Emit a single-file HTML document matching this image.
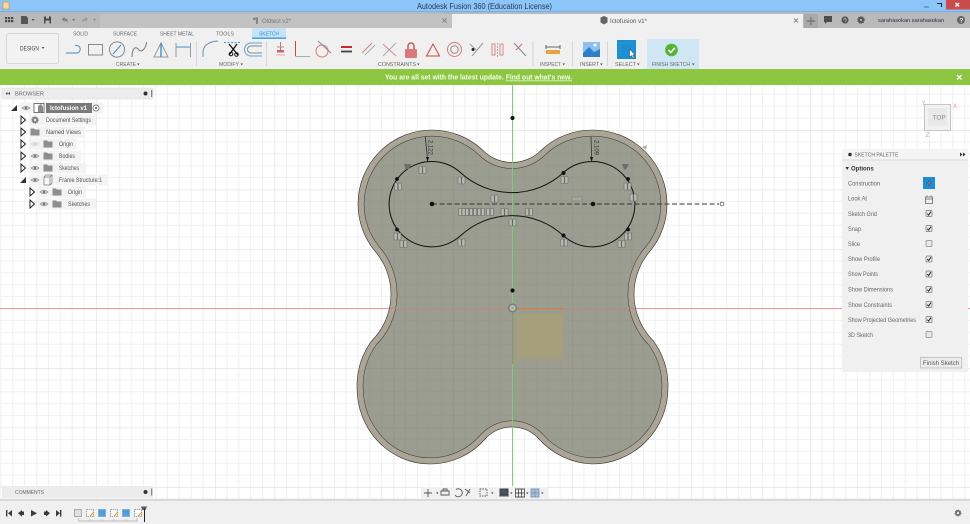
<!DOCTYPE html>
<html><head><meta charset="utf-8"><title>Autodesk Fusion 360</title>
<style>
html,body{margin:0;padding:0;background:#fff;width:970px;height:524px;overflow:hidden}
svg{display:block;filter:blur(.35px)}
text{font-family:"Liberation Sans",sans-serif;font-size:6px;fill:#555}
.l{font-size:5.6px;fill:#666}
.t{font-size:6px;fill:#555}
.p{font-size:6px;fill:#666}
</style></head><body>
<svg width="970" height="524" viewBox="0 0 970 524" xmlns="http://www.w3.org/2000/svg">
<defs>
<pattern id="g" patternUnits="userSpaceOnUse" x="512.5" y="308.5" width="59.5" height="59.5">
<path d="M11.9 0V59.5M23.8 0V59.5M35.7 0V59.5M47.6 0V59.5M0 11.9H59.5M0 23.8H59.5M0 35.7H59.5M0 47.6H59.5" stroke="#f0f0f0" stroke-width="1" fill="none"/>
<path d="M0 0V59.5M0 0H59.5" stroke="#e4e4e4" stroke-width="1.4" fill="none"/>
</pattern>
<pattern id="gi" patternUnits="userSpaceOnUse" x="512.5" y="308.5" width="59.5" height="59.5">
<path d="M11.9 0V59.5M23.8 0V59.5M35.7 0V59.5M47.6 0V59.5M0 11.9H59.5M0 23.8H59.5M0 35.7H59.5M0 47.6H59.5" stroke="#000" stroke-opacity=".02" stroke-width="1" fill="none"/>
<path d="M0 0V59.5M0 0H59.5" stroke="#000" stroke-opacity=".05" stroke-width="1.4" fill="none"/>
</pattern>
<path id="o" d="M483,150.4 A41 41 0 0 0 541,150.4 A74 74 0 0 1 593,130 A74 74 0 0 1 667,204 A74 74 0 0 1 650.4,250.7 A66 66 0 0 0 653.3,340.8 A75 76 0 0 1 668,388 A76 76 0 0 1 592,464 A76 76 0 0 1 538,438 A36 36 0 0 0 486,438 A74 76 0 0 1 430,464 A73 76 0 0 1 357,388 A74 76 0 0 1 371.7,340.8 A66 66 0 0 0 374.6,250.7 A74 74 0 0 1 358,204 A74 74 0 0 1 432,130 A74 74 0 0 1 483,150.4 Z"/>
<clipPath id="oc"><use href="#o"/></clipPath>
<g id="c"><rect x="-3.5" y="-3.5" width="3.2" height="7" rx=".8" fill="#b9bab0" stroke="#666" stroke-width=".6"/><rect x=".3" y="-3.5" width="3.2" height="7" rx=".8" fill="#b9bab0" stroke="#666" stroke-width=".6"/></g>
<g id="eye"><path d="M-4 0Q0 -3.5 4 0Q0 3.5 -4 0Z" fill="#ddd" stroke="#8a8a8a" stroke-width=".7"/><circle r="1.3" fill="#777"/></g>
<g id="fo"><path d="M-4.5 -3.5H-1L0 -2.5H4.5V3.5H-4.5Z" fill="#8e8e8e"/></g>
<path id="tr" d="M-2 -4L2.5 0L-2 4Z" fill="#fff" stroke="#222" stroke-width="1"/>
<path id="td" d="M-3 3H3V-3Z" fill="#333"/>
<g id="ck"><rect x="-3" y="-3" width="6" height="6" rx="1" fill="#e8e8e8" stroke="#777" stroke-width=".7"/><path d="M-1.7 .2L-.4 1.6L1.9 -1.8" fill="none" stroke="#222" stroke-width="1"/></g>
<g id="un"><rect x="-3" y="-3" width="6" height="6" rx="1" fill="#e8e8e8" stroke="#888" stroke-width=".7"/></g>
</defs>

<!-- canvas -->
<rect x="0" y="85" width="970" height="415" fill="#fff"/>
<rect x="0" y="85" width="970" height="415" fill="url(#g)"/>
<path d="M0 308.5H970" stroke="#ec9a9a" stroke-width="1"/>

<!-- body -->
<use href="#o" fill="#9b9d91"/>
<g clip-path="url(#oc)">
<rect x="350" y="125" width="325" height="345" fill="url(#gi)"/>
<use href="#o" fill="none" stroke="#333" stroke-width="12.7"/>
<use href="#o" fill="none" stroke="#aaa595" stroke-width="11.7"/>
</g>
<use href="#o" fill="none" stroke="#333" stroke-width=".6"/>
<path d="M391 308.5H634" stroke="#c08a80" stroke-width="1"/>
<rect x="518" y="314" width="45" height="45" fill="#a69f7c"/>
<path d="M512.5 85V486" stroke="#74d474" stroke-width="1"/>
<path d="M512.5 312V364" stroke="#8f9a3a" stroke-width="1"/>
<path d="M518 308.5H563" stroke="#de7a2c" stroke-width="1"/>
<circle cx="512.5" cy="308" r="3.8" fill="#bbb" stroke="#777" stroke-width="1.4"/>
<circle cx="512.5" cy="308" r="1.2" fill="#6ac06a"/>

<!-- sketch -->
<path d="M461,173 A76 76 0 0 0 563,173 A42.7 42.7 0 1 1 563,235.3 A76 76 0 0 0 461,235.3 A42.7 42.7 0 1 1 461,173 Z" fill="none" stroke="#111" stroke-width="1"/>
<path d="M432 204H719" stroke="#333" stroke-width=".9" stroke-dasharray="5 2.5"/>
<circle cx="722" cy="204" r="1.9" fill="#fff" stroke="#444" stroke-width=".7"/>
<g fill="#111"><circle cx="432" cy="204" r="2.3"/><circle cx="593" cy="204" r="2.3"/><circle cx="512.5" cy="118" r="2.1"/><circle cx="512.5" cy="290.5" r="2.1"/><circle cx="397" cy="179" r="1.9"/><circle cx="397" cy="229.5" r="1.9"/><circle cx="563.5" cy="173" r="2"/><circle cx="563.5" cy="235.5" r="2"/><circle cx="628" cy="179" r="1.9"/><circle cx="628" cy="229.5" r="1.9"/></g>
<path d="M425.3 136.7L427.4 158M591 136.7L591.6 158" stroke="#222" stroke-width=".7"/>
<path d="M426 157L429 157L427.6 162ZM590 157L593 157L591.7 162Z" fill="#111"/>
<text transform="translate(428.5,140) rotate(90)" style="font-size:6px;fill:#333">2.122</text>
<text transform="translate(594.5,140) rotate(90)" style="font-size:6px;fill:#333">2.109</text>
<path d="M404 164H411L409.5 169H405.5ZM622 164H629L626 169.5H624Z" fill="#6d6d6d"/>
<path d="M642 147L647 145L646 150Z" fill="#b0b0a8"/>
<use href="#c" x="422.5" y="170"/><use href="#c" x="461.5" y="180.5"/><use href="#c" x="494.5" y="198.5"/><use href="#c" x="398" y="186.5"/><use href="#c" x="564.5" y="180"/><use href="#c" x="627.5" y="186.5"/><use href="#c" x="633.5" y="197.5"/>
<use href="#c" x="462" y="212"/><use href="#c" x="465.5" y="212"/><use href="#c" x="469" y="212"/><use href="#c" x="473" y="212"/><use href="#c" x="477" y="212"/><use href="#c" x="481" y="212"/><use href="#c" x="490" y="212"/><use href="#c" x="504.5" y="212"/><use href="#c" x="529" y="212"/>
<use href="#c" x="512.5" y="222.5"/><use href="#c" x="397.5" y="236.5"/><use href="#c" x="403.5" y="244"/><use href="#c" x="461.5" y="242.5"/><use href="#c" x="564" y="242.5"/><use href="#c" x="628" y="236.5"/><use href="#c" x="621.5" y="244"/>
<rect x="572" y="197" width="10" height="4" fill="#a9a99e" stroke="#777" stroke-width=".5"/>

<!-- viewcube -->
<rect x="924.5" y="104.5" width="26" height="26" fill="#f2f2f2" stroke="#c4c4c4" stroke-width="1"/>
<rect x="928" y="108" width="19" height="18" fill="#e9e9e9"/>
<text x="932.5" y="119.5" style="font-size:6.5px;fill:#888">TOP</text>
<text x="921.5" y="105" style="font-size:6px;fill:#8fd68f">Y</text>
<text x="953" y="108" style="font-size:6px;fill:#e89090">X</text>
<text x="925.5" y="137" style="font-size:6.5px;fill:#8fb8ea">Z</text>

<!-- browser -->
<rect x="2" y="88" width="151" height="11" fill="#ececec" stroke="#ddd" stroke-width=".5"/>
<path d="M5.5 93.5l2 -1.5v3zM8 93.5l2 -1.5v3z" fill="#444"/>
<text x="15" y="95.3" class="l" style="font-size:5.6px">BROWSER</text>
<circle cx="145.5" cy="93.5" r="2" fill="#333"/><rect x="151" y="90" width="1.3" height="7" fill="#888"/>

<g fill="#f3f3f3">
<rect x="20" y="102.5" width="83" height="11"/><rect x="29" y="114.5" width="67" height="11"/><rect x="29" y="126.5" width="56" height="11"/><rect x="29" y="138.5" width="48" height="11"/><rect x="29" y="150.5" width="52" height="11"/><rect x="29" y="162.5" width="57" height="11"/><rect x="29" y="174.5" width="78" height="11"/><rect x="38" y="186.5" width="48" height="11"/><rect x="38" y="198.5" width="58" height="11"/>
</g>
<use href="#td" x="14" y="108"/><use href="#eye" x="26" y="108"/>
<rect x="34" y="103.5" width="10" height="9" fill="#fff" stroke="#555" stroke-width=".8"/><path d="M38 112V106L41 104L43 107V112Z" fill="#888"/>
<rect x="46" y="103" width="46" height="10" fill="#7a7a7a"/>
<text x="50" y="110" style="font-size:6px;fill:#fff;font-weight:bold">Ictofusion v1</text>
<circle cx="96" cy="108" r="3" fill="#fff" stroke="#555" stroke-width=".7"/><circle cx="96" cy="108" r="1" fill="#444"/>

<use href="#tr" x="23" y="120"/><circle cx="35" cy="120" r="3.2" fill="#888" stroke="#777" stroke-dasharray="1 1"/><circle cx="35" cy="120" r="1.1" fill="#eee"/>
<text x="46" y="122" class="t" textLength="45" lengthAdjust="spacingAndGlyphs">Document Settings</text>
<use href="#tr" x="23" y="132"/><use href="#fo" x="35" y="132"/>
<text x="46" y="134" class="t" textLength="35" lengthAdjust="spacingAndGlyphs">Named Views</text>
<use href="#tr" x="23" y="144"/><use href="#eye" x="35" y="144" opacity=".3"/><use href="#fo" x="48" y="144"/>
<text x="59" y="146" class="t" textLength="14" lengthAdjust="spacingAndGlyphs">Origin</text>
<use href="#tr" x="23" y="156"/><use href="#eye" x="35" y="156"/><use href="#fo" x="48" y="156"/>
<text x="59" y="158" class="t" textLength="16" lengthAdjust="spacingAndGlyphs">Bodies</text>
<use href="#tr" x="23" y="168"/><use href="#eye" x="35" y="168"/><use href="#fo" x="48" y="168"/>
<text x="59" y="170" class="t" textLength="20" lengthAdjust="spacingAndGlyphs">Sketches</text>
<use href="#td" x="23" y="180"/><use href="#eye" x="35" y="180"/>
<path d="M44 177L46 175H52V183L50 185H44ZM44 177H50V185M50 177L52 175" fill="#f6f6f6" stroke="#777" stroke-width=".7"/>
<text x="59" y="182" class="t" textLength="43" lengthAdjust="spacingAndGlyphs">Frame Structure:1</text>
<use href="#tr" x="32" y="192"/><use href="#eye" x="44" y="192"/><use href="#fo" x="57" y="192"/>
<text x="68" y="194" class="t" textLength="14" lengthAdjust="spacingAndGlyphs">Origin</text>
<use href="#tr" x="32" y="204"/><use href="#eye" x="44" y="204"/><use href="#fo" x="57" y="204"/>
<text x="68" y="206" class="t" textLength="22" lengthAdjust="spacingAndGlyphs">Sketches</text>

<!-- comments -->
<rect x="2" y="486" width="151" height="12" fill="#ececec"/>
<text x="15" y="494" class="l" textLength="29" lengthAdjust="spacingAndGlyphs">COMMENTS</text>
<circle cx="145.5" cy="492" r="2" fill="#333"/><rect x="151" y="488.5" width="1.3" height="7" fill="#888"/>

<!-- palette -->
<rect x="842" y="149" width="126" height="223" fill="#f0f0f0"/>
<rect x="842" y="149" width="126" height="11" fill="#f4f4f4"/>
<path d="M842 160H968" stroke="#cfcfcf" stroke-width=".8"/>
<circle cx="850" cy="154.5" r="1.8" fill="#333"/>
<text x="854.5" y="156.5" class="l" textLength="44" lengthAdjust="spacingAndGlyphs">SKETCH PALETTE</text>
<path d="M960 152.5l2.5 2 -2.5 2zM963 152.5l2.5 2 -2.5 2z" fill="#333"/>
<path d="M845.5 167l3.5 0 -1.8 3z" fill="#333"/>
<text x="851" y="170.5" style="font-size:6px;fill:#333;font-weight:bold">Options</text>
<g class="p">
<text x="848" y="185.5" class="p" textLength="32" lengthAdjust="spacingAndGlyphs">Construction</text>
<text x="848" y="200.5" class="p" textLength="19" lengthAdjust="spacingAndGlyphs">Look At</text>
<text x="848" y="216" class="p" textLength="29" lengthAdjust="spacingAndGlyphs">Sketch Grid</text>
<text x="848" y="231" class="p" textLength="13" lengthAdjust="spacingAndGlyphs">Snap</text>
<text x="848" y="246" class="p" textLength="12" lengthAdjust="spacingAndGlyphs">Slice</text>
<text x="848" y="261" class="p" textLength="32" lengthAdjust="spacingAndGlyphs">Show Profile</text>
<text x="848" y="276" class="p" textLength="30" lengthAdjust="spacingAndGlyphs">Show Points</text>
<text x="848" y="291.5" class="p" textLength="45" lengthAdjust="spacingAndGlyphs">Show Dimensions</text>
<text x="848" y="307" class="p" textLength="44" lengthAdjust="spacingAndGlyphs">Show Constraints</text>
<text x="848" y="322" class="p" textLength="68" lengthAdjust="spacingAndGlyphs">Show Projected Geometries</text>
<text x="848" y="337" class="p" textLength="25" lengthAdjust="spacingAndGlyphs">3D Sketch</text>
</g>
<rect x="923" y="177" width="12" height="12" fill="#1a8fd8"/>
<path d="M926 183H932M929 180V186" stroke="#4c5f77" stroke-width="1"/><circle cx="929" cy="183" r="1" fill="#d65a5a"/>
<path d="M925.5 197H932.5V203.5H925.5ZM925.5 199H932.5" fill="#eee" stroke="#666" stroke-width=".8"/>
<path d="M927 195.5V197M931 195.5V197" stroke="#666" stroke-width=".8"/>
<use href="#ck" x="929" y="213.5"/><use href="#ck" x="929" y="228.5"/><use href="#un" x="929" y="243.5"/><use href="#ck" x="929" y="259"/><use href="#ck" x="929" y="274"/><use href="#ck" x="929" y="289.5"/><use href="#ck" x="929" y="304.5"/><use href="#ck" x="929" y="319.5"/><use href="#un" x="929" y="334.5"/>
<rect x="920.5" y="357.5" width="41" height="10.5" fill="#ececec" stroke="#bbb" stroke-width=".8"/>
<text x="923" y="365" style="font-size:6.4px;fill:#555" textLength="36" lengthAdjust="spacingAndGlyphs">Finish Sketch</text>

<!-- nav bar -->
<rect x="421" y="487" width="127" height="12.5" fill="#f1f1f1"/>
<g fill="none" stroke="#555" stroke-width=".9">
<path d="M424 493H432M428 489V497"/><path d="M441 491H449V495H441ZM443 491V489H447V491"/><path d="M456 489.5A4 4 0 1 1 455 495M465 489L470 493M470 489L466 496"/><rect x="480" y="489" width="7" height="7" stroke-dasharray="1.5 1"/>
<rect x="500" y="489" width="8" height="6" fill="#456" stroke="#333"/><path d="M499 496H509"/>
<path d="M515.5 489H524.5V497H515.5ZM518.5 489V497M521.5 489V497M515.5 493H524.5"/>
<path d="M531 489H539V497H531ZM535 489V497M531 493H539" stroke="#7d96b4" fill="#a9c0da"/>
</g>
<path d="M436 492.5h2.5l-1.2 1.5zM491 492.5h2.5l-1.2 1.5zM510 492.5h2.5l-1.2 1.5zM526 492.5h2.5l-1.2 1.5zM541 492.5h2.5l-1.2 1.5z" fill="#333"/>

<!-- timeline -->
<rect x="0" y="500" width="970" height="24" fill="#f0f0f0"/>
<path d="M0 500H970" stroke="#c2c2c2" stroke-width="1"/>
<g fill="#3b3b3b">
<path d="M6 510H7.4V516.5H6ZM12 510V516.5L8 513.2Z"/><path d="M18 513.2L22 510V516.5ZM22 511.5H24V515H22Z"/><path d="M31 510L37 513.2L31 516.5Z"/><path d="M44 511.5H46V515H44ZM46 510L50 513.2L46 516.5Z"/><path d="M56 510L60 513.2L56 516.5ZM60 510H61.4V516.5H60Z"/>
</g>
<rect x="74.5" y="509.5" width="7" height="7" fill="#e0e0e0" stroke="#999" stroke-width=".8"/>
<rect x="86.5" y="509.5" width="7" height="7" fill="#fff" stroke="#888" stroke-width=".8" stroke-dasharray="1.5 .8"/><path d="M90 516L94 512" stroke="#e39a2c" stroke-width="1.2"/>
<rect x="98.5" y="509.5" width="7" height="7" fill="#4a9fe0" stroke="#7fa9cc" stroke-width=".8"/>
<rect x="110.5" y="509.5" width="7" height="7" fill="#fff" stroke="#888" stroke-width=".8" stroke-dasharray="1.5 .8"/><path d="M114 516L118 512" stroke="#e39a2c" stroke-width="1.2"/>
<rect x="122.5" y="509.5" width="7" height="7" fill="#4a9fe0" stroke="#7fa9cc" stroke-width=".8"/>
<rect x="134.5" y="509.5" width="7" height="7" fill="#fff" stroke="#888" stroke-width=".8" stroke-dasharray="1.5 .8"/><path d="M138 516L142 512" stroke="#e39a2c" stroke-width="1.2"/>
<path d="M78.5 518V521H137V518M90 519V521M102 519V521M114 519V521M126 519V521" fill="none" stroke="#aaa" stroke-width=".7"/>
<path d="M141 506.5H147L145.5 510H142.5Z" fill="#555"/><path d="M144.5 509V522" stroke="#222" stroke-width="1"/>
<circle cx="958" cy="513" r="3" fill="#777" stroke="#777" stroke-dasharray="1 1"/><circle cx="958" cy="513" r="1.1" fill="#eee"/>

<!-- title bar -->
<rect x="0" y="0" width="970" height="11.5" fill="#8bc5fa"/>
<rect x="0" y="11" width="970" height="1.4" fill="#7eaedb"/>
<rect x="3" y="2" width="6" height="7" fill="#f4d9a6" stroke="#d6953f" stroke-width=".7"/>
<text x="417" y="9" style="font-size:8.4px;fill:#2a3a4a" textLength="135" lengthAdjust="spacingAndGlyphs">Autodesk Fusion 360 (Education License)</text>
<path d="M924 7H929" stroke="#5a7da5" stroke-width="1.2"/>
<path d="M937 3.5H941.5V7M937 3.5H939" fill="none" stroke="#223" stroke-width="1.1"/>
<rect x="946" y="0" width="24" height="9.5" fill="#cb4b4b"/>
<path d="M955.5 3L959 6.5M959 3L955.5 6.5" stroke="#fff" stroke-width="1.3"/>

<!-- tab bar -->
<rect x="0" y="12.4" width="970" height="15.8" fill="#b9b9b9"/>
<rect x="100" y="14" width="352" height="14.2" fill="#c2c2c2"/>
<rect x="452" y="14" width="351" height="14.2" fill="#f0f0f0"/>
<rect x="804" y="14" width="14" height="14.2" fill="#a9a9a9"/>
<path d="M811 17V25M807 21H815" stroke="#777" stroke-width="1.4"/>
<g fill="#4a4a4a"><rect x="5" y="17" width="2.2" height="2.2"/><rect x="8" y="17" width="2.2" height="2.2"/><rect x="11" y="17" width="2.2" height="2.2"/><rect x="5" y="20" width="2.2" height="2.2"/><rect x="8" y="20" width="2.2" height="2.2"/><rect x="11" y="20" width="2.2" height="2.2"/></g>
<path d="M21 16H26L28 18V24H21Z" fill="#555"/><path d="M31.5 19h3l-1.5 2z" fill="#555"/>
<path d="M44 16.5H51V23.5H44Z" fill="#4a4a4a"/><rect x="45.5" y="20.5" width="4" height="3" fill="#bbb"/><rect x="46" y="16.5" width="3" height="2" fill="#bbb"/>
<path d="M62 19L64.5 17V18.5C67.5 18.5 68 20 67.5 23C67 21 66 20.5 64.5 20.5V22Z" fill="#777"/><path d="M72 19h3l-1.5 2z" fill="#777"/>
<path d="M88 19L85.5 17V18.5C82.5 18.5 82 20 82.5 23C83 21 84 20.5 85.5 20.5V22Z" fill="#9a9a9a"/><path d="M93 19h3l-1.5 2z" fill="#888"/>
<path d="M253 18L258 17V24H256V20H253Z" fill="#888"/>
<text x="262" y="23" style="font-size:6px;fill:#777" textLength="29" lengthAdjust="spacingAndGlyphs">Oldtest v2*</text>
<path d="M442.5 18.5L446.5 22.5M446.5 18.5L442.5 22.5" stroke="#888" stroke-width="1"/>
<path d="M600.5 17.5L604 16L607.5 17.5V22.5L604 24.5L600.5 22.5Z" fill="#666"/>
<text x="610" y="23" style="font-size:6px;fill:#555" textLength="37" lengthAdjust="spacingAndGlyphs">Ictofusion v1*</text>
<path d="M794 18.5L798 22.5M798 18.5L794 22.5" stroke="#888" stroke-width="1"/>
<path d="M824 16H832V22H827L825 24V22H824Z" fill="#4d4d4d"/>
<circle cx="845" cy="20" r="3.6" fill="#555"/><path d="M843.5 20L845 18L846.5 20L845 22" stroke="#bbb" stroke-width=".7" fill="none"/>
<circle cx="861" cy="20" r="3.2" fill="#555" stroke="#555" stroke-dasharray="1 1" stroke-width="1.2"/><circle cx="861" cy="20" r="1" fill="#ccc"/>
<text x="878" y="22" style="font-size:5.6px;fill:#2d2d50" textLength="66" lengthAdjust="spacingAndGlyphs">sarahasokan sarahasokan</text>
<circle cx="961" cy="20" r="4" fill="#666"/><text x="959.4" y="22.6" style="font-size:6.5px;fill:#eee;font-weight:bold">?</text>

<!-- toolbar -->
<rect x="0" y="28" width="970" height="41" fill="#f0f0f0"/>
<rect x="252" y="28" width="34" height="10" fill="#c5e3f6"/>
<rect x="252" y="37.5" width="34" height="1.4" fill="#3d9ce0"/>
<text x="73" y="35.5" class="l" textLength="15" lengthAdjust="spacingAndGlyphs">SOLID</text>
<text x="113" y="35.5" class="l" textLength="24" lengthAdjust="spacingAndGlyphs">SURFACE</text>
<text x="160" y="35.5" class="l" textLength="34" lengthAdjust="spacingAndGlyphs">SHEET METAL</text>
<text x="216" y="35.5" class="l" textLength="18" lengthAdjust="spacingAndGlyphs">TOOLS</text>
<text x="259" y="35.5" style="font-size:5.6px;fill:#2f8fd6" textLength="20" lengthAdjust="spacingAndGlyphs">SKETCH</text>
<rect x="6.5" y="33.5" width="52" height="30" rx="2" fill="#f2f2f2" stroke="#d6d6d6"/>
<text x="20" y="50.5" style="font-size:6px;fill:#444" textLength="19" lengthAdjust="spacingAndGlyphs">DESIGN</text>
<path d="M41.5 47h3l-1.5 2z" fill="#555"/>

<g fill="none" stroke-width="1">
<path d="M66 53H77A3.8 3.8 0 0 0 77 45.5H75" stroke="#4a87bd"/>
<rect x="88.5" y="44.5" width="14" height="10.5" stroke="#8a8a8a"/>
<circle cx="117" cy="49.5" r="7.6" stroke="#8a8a8a"/><path d="M113 54L121 45" stroke="#3d8fd6"/>
<path d="M132 57C132 47 136 46 139 50C142 53 146 48 146.5 42" stroke="#777"/>
<path d="M161 43L154 57H168Z" stroke="#9a9a9a"/><path d="M161 43V57" stroke="#3d8fd6" stroke-width="1.4"/>
<path d="M176 43V57M190.5 43V57" stroke="#999"/><path d="M176 47H190" stroke="#3d8fd6"/>
<path d="M196.5 41V66M266.5 41V66M533 41V66M572.5 41V66M607.5 41V66" stroke="#d5d5d5"/>
<path d="M203 57V53Q203 42 218 41" stroke="#6d8ea9"/>
<path d="M224 42.5H240" stroke="#4a9bdb" stroke-dasharray="2 1.5"/>
<path d="M229 44L238 55M237 44L229 55" stroke="#111" stroke-width="1.3"/><circle cx="231" cy="54" r="1.8" stroke="#111"/><circle cx="236.5" cy="54.5" r="1.8" stroke="#111"/>
<path d="M262 43H251A6.5 6.5 0 0 0 251 56H262" stroke="#5ba4e0"/><path d="M262 46H251A3.5 3.5 0 0 0 251 53H262" stroke="#888"/>
<path d="M280.5 42V51" stroke="#d66" stroke-width="1"/><path d="M277 47H284" stroke="#999"/><rect x="277" y="50" width="7" height="2.5" fill="#c66" stroke="none"/><path d="M276.5 55H285" stroke="#d66" stroke-dasharray="1 1"/>
<path d="M295.5 41V56" stroke="#c44"/><path d="M295.5 56.5H310" stroke="#aaa"/>
<circle cx="322" cy="51" r="6" stroke="#d77"/><path d="M318 41L331 53" stroke="#888"/>
<path d="M341 47H352" stroke="#c11" stroke-width="1.8"/><path d="M341 51.5H352" stroke="#444" stroke-width="1.8"/>
<path d="M362 53L372 43" stroke="#d77"/><path d="M365 55L375 45" stroke="#aaa"/>
<path d="M383 44L396 56" stroke="#d88"/><path d="M383 56L396 43" stroke="#aaa"/>
<path d="M408 49V46A3 3 0 0 1 414 46V49" stroke="#c55" stroke-width="1.5"/>
<path d="M433 44L426.5 56H439.5Z" stroke="#c44"/>
<circle cx="454.5" cy="49.5" r="7" stroke="#d77"/><circle cx="454.5" cy="49.5" r="3.8" stroke="#888"/>
<path d="M470 44L476 50M483 43L472 56" stroke="#999"/>
<path d="M492 44H495V55H492ZM503 44H500V55H503Z" stroke="#d88"/><path d="M497.5 43V57" stroke="#aaa" stroke-dasharray="2 1"/>
<path d="M514 43L526 56" stroke="#888"/><path d="M516 50L522 44" stroke="#d66"/>
<path d="M546 45V49M560 45V49M546 47H560" stroke="#666"/>
</g>
<rect x="405" y="49" width="12" height="9" rx="1" fill="#d9797b"/>
<circle cx="473" cy="49.5" r="1.5" fill="#222"/>
<rect x="546" y="50" width="14" height="4" fill="#eaa53a"/>
<rect x="583" y="42" width="17" height="15" fill="#8dc0ee"/><path d="M583 57V53L589 47L594 52L600 49V57Z" fill="#2d7fc9"/><circle cx="595" cy="45" r="1.5" fill="#fff"/>
<rect x="617" y="40" width="19" height="19" fill="#1a8fd8"/><path d="M620 43H633M620 43V56" stroke="#3fc06d" stroke-width=".6" stroke-dasharray="1.5 1.5"/>
<path d="M629.5 49V57L631.5 55.5L633 58.5L634.2 58L632.8 55H635Z" fill="#fff" stroke="#333" stroke-width=".5"/>
<rect x="647" y="39" width="52" height="30" fill="#cfe7f5"/>
<circle cx="671.5" cy="50" r="6.3" fill="#53b42d"/><path d="M668.5 50L670.8 52.5L674.8 47.8" fill="none" stroke="#fff" stroke-width="1.6"/>
<text x="116" y="66" class="l" textLength="20" lengthAdjust="spacingAndGlyphs">CREATE</text><path d="M137 63.5h2.6l-1.3 1.8z" fill="#444"/>
<text x="219" y="66" class="l" textLength="20" lengthAdjust="spacingAndGlyphs">MODIFY</text><path d="M240.5 63.5h2.6l-1.3 1.8z" fill="#444"/>
<text x="378" y="66" class="l" textLength="38" lengthAdjust="spacingAndGlyphs">CONSTRAINTS</text><path d="M417 63.5h2.6l-1.3 1.8z" fill="#444"/>
<text x="540" y="66" class="l" textLength="21" lengthAdjust="spacingAndGlyphs">INSPECT</text><path d="M562.5 63.5h2.6l-1.3 1.8z" fill="#444"/>
<text x="580" y="66" class="l" textLength="19" lengthAdjust="spacingAndGlyphs">INSERT</text><path d="M600 63.5h2.6l-1.3 1.8z" fill="#444"/>
<text x="615" y="66" class="l" textLength="21" lengthAdjust="spacingAndGlyphs">SELECT</text><path d="M637 63.5h2.6l-1.3 1.8z" fill="#444"/>
<text x="652" y="66" class="l" textLength="38" lengthAdjust="spacingAndGlyphs">FINISH SKETCH</text><path d="M692 63.5h2.6l-1.3 1.8z" fill="#444"/>

<!-- green banner -->
<rect x="0" y="69" width="970" height="16" fill="#8dc742"/>
<text x="385" y="79.5" style="font-size:7px;fill:#f6fbee;font-weight:bold" textLength="187" lengthAdjust="spacingAndGlyphs">You are all set with the latest update. <tspan text-decoration="underline" style="fill:#f6fbee">Find out what's new.</tspan></text>
<path d="M957 75L961.5 79.5M961.5 75L957 79.5" stroke="#fff" stroke-width="1.3"/>
</svg>
</body></html>
